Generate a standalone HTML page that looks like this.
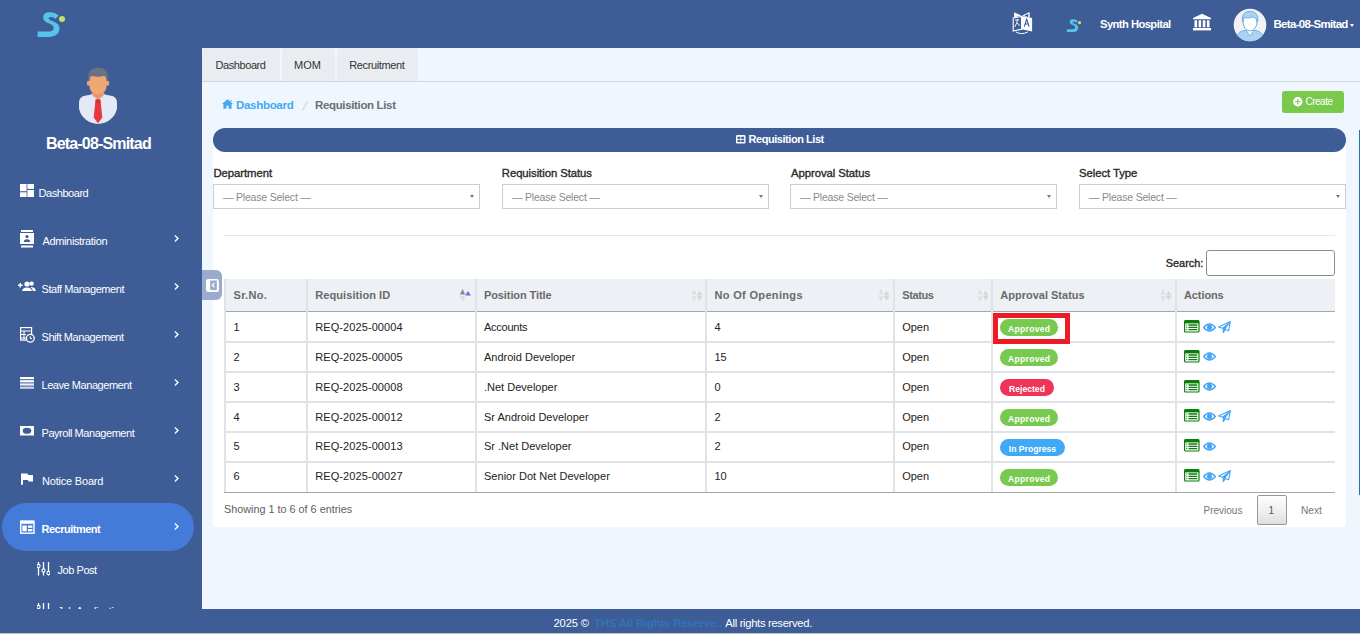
<!DOCTYPE html>
<html><head><meta charset="utf-8">
<style>
*{box-sizing:border-box;margin:0;padding:0}
html,body{width:1360px;height:634px;overflow:hidden}
body{position:relative;background:#eff6fe;font-family:"Liberation Sans",sans-serif;color:#222}
.a{position:absolute;white-space:nowrap}
.blue{background:#3e5d97}
.t{color:#fff;font-size:11px;letter-spacing:-0.45px;line-height:12px}
.chev{position:absolute;left:174px;width:5px;height:7px}
.tab{position:absolute;top:48px;height:33px;background:#e9edf1;border-radius:3px 3px 0 0;font-size:11px;color:#333;line-height:33px;text-align:center}
.lbl{font-size:11.3px;font-weight:normal;color:#2a2a2a;line-height:12px;-webkit-text-stroke:0.35px #2a2a2a}
.sel{position:absolute;top:184px;height:25px;width:267px;background:#fff;border:1px solid #c9ced6}
.sel span{position:absolute;left:9px;top:6px;font-size:10.5px;color:#8a8a8a;letter-spacing:-0.2px;line-height:12px}
.sel i{position:absolute;right:5.5px;top:10px;width:0;height:0;border-left:2.5px solid transparent;border-right:2.5px solid transparent;border-top:3px solid #777}
.th{position:absolute;font-size:11px;font-weight:bold;color:#6a6a6a;line-height:12px;top:289px}
.td{position:absolute;font-size:11px;color:#222;line-height:12px}
.badge{position:absolute;left:1000px;height:17px;border-radius:9px;color:#fff;font-size:8.6px;font-weight:bold;line-height:20px;text-align:center;overflow:hidden}
.vl{position:absolute;top:279px;width:2px;height:213px;background:#dfe3e8}
.hl{position:absolute;left:224px;width:1111px;height:2px;background:#dfe3e8}
.tt{font-size:11px;color:#333;line-height:12px;top:59px}
.sort{position:absolute;top:289px;width:11px;height:13px}
</style></head><body>

<!-- header -->
<div class="a blue" style="left:0;top:0;width:1360px;height:48px"></div>
<!-- sidebar -->
<div class="a blue side" style="left:0;top:48px;width:202px;height:586px"></div>

<!-- logo -->
<svg class="a" style="left:30px;top:5px" width="40" height="40" viewBox="30 5 40 40">
<path d="M58.6,15.6 C56,12.5 50.5,11.6 47,12.6 C43,13.8 42.3,17.8 44.2,20.4 C46.2,23.2 52.8,23.6 53.6,27 C54.1,29.5 52.3,31.6 48.5,31.6 L37.6,31.6 L37.6,36.9 L49,36.9 C56.5,36.9 60,32.6 59.4,27.6 C58.8,22.6 52.6,21.6 49.6,19.8 C48,18.8 48.3,17.4 50.2,17.1 C52.5,16.8 54.6,17.8 55.4,19 Z" fill="#56c3ec"/>
<circle cx="62" cy="19" r="3" fill="#c6e06a"/>
</svg>
<!-- avatar -->
<svg class="a" style="left:76px;top:64px" width="46" height="64" viewBox="76 64 46 64">
<path d="M79,103 Q79,96 86,95.5 L91.5,94.5 L104.5,94.5 L110,95.5 Q117,96 117,103 L117,108.5 A19.4,19.4 0 0,1 79,108.5 Z" fill="#e4e9f5"/>
<path d="M91,94.6 L98,101 L105,94.6 L103.5,93 L92.5,93 Z" fill="#d5dbe6"/>
<path d="M92.5,89 L103.5,89 L103.5,95.5 L98,99.5 L92.5,95.5 Z" fill="#e39a68"/>
<path d="M96,99.6 L100,99.6 L100.8,103 L102.3,117.5 L98,123.2 L93.7,117.5 L95.2,103 Z" fill="#e8383f"/>
<path d="M95.6,99.6 L100.4,99.6 L100.6,102.8 L95.4,102.8 Z" fill="#d42e36"/>
<ellipse cx="88.6" cy="83.2" rx="1.8" ry="2.6" fill="#eea46e"/>
<ellipse cx="107.4" cy="83.2" rx="1.8" ry="2.6" fill="#eea46e"/>
<path d="M89.3,78 Q89.3,70 98,70 Q106.7,70 106.7,78 L106.7,85 Q106.5,94 98,94.3 Q89.5,94 89.3,85 Z" fill="#f0a774"/>
<path d="M88.2,81 L88.2,76 Q88.2,68 98,67.8 Q107.8,68 107.8,76 L107.8,81 L106.4,81 Q106.4,76.5 104,76 Q98,77.5 92,76 Q89.6,76.5 89.6,81 Z" fill="#6b7283"/>
</svg>
<div class="a" style="left:46px;top:134.5px;font-size:16px;font-weight:bold;color:#fff;letter-spacing:-0.83px;line-height:18px">Beta-08-Smitad</div>

<!-- menu -->
<svg class="a" style="left:20px;top:184px" width="14" height="13"><rect x="0" y="0" width="6.6" height="7.2" fill="#fff"/><rect x="0" y="8.3" width="6.6" height="4.7" fill="#fff"/><rect x="7.4" y="0" width="6.6" height="4.9" fill="#fff"/><rect x="7.4" y="6" width="6.6" height="7" fill="#fff"/></svg>
<div class="a t" style="left:38.5px;top:187.2px">Dashboard</div>

<svg class="a" style="left:20px;top:230px" width="15" height="18"><rect x="1" y="0" width="12" height="2" fill="#fff"/><rect x="0" y="3" width="14" height="11" fill="#fff"/><rect x="1" y="15.5" width="12" height="2" fill="#fff"/><circle cx="7" cy="6.6" r="1.6" fill="#3e5d97"/><path d="M3.8,12 Q3.8,9.3 7,9.3 Q10.2,9.3 10.2,12 Z" fill="#3e5d97"/></svg>
<div class="a t" style="left:42.5px;top:235.2px;letter-spacing:-0.36px">Administration</div>
<svg class="chev" style="top:235.0px" viewBox="0 0 5 7"><path d="M0.8,0.6 L4,3.5 L0.8,6.4" fill="none" stroke="#fff" stroke-width="1.3"/></svg>

<svg class="a" style="left:18px;top:281px" width="18" height="11"><path d="M0,4.3 H4.6 M2.3,2 V6.6" stroke="#fff" stroke-width="1.4"/><circle cx="9" cy="3" r="2.6" fill="#fff"/><circle cx="13.6" cy="2.6" r="2.2" fill="#fff"/><path d="M4.2,10 Q4.2,6.5 9,6.5 Q13.8,6.5 13.8,10 Z" fill="#fff"/><path d="M12.4,6 Q17.6,6 17.6,9.5 V10 H14.8 Q14.8,7.5 12.4,6 Z" fill="#fff"/></svg>
<div class="a t" style="left:41.5px;top:282.8px">Staff Management</div>
<svg class="chev" style="top:282.5px" viewBox="0 0 5 7"><path d="M0.8,0.6 L4,3.5 L0.8,6.4" fill="none" stroke="#fff" stroke-width="1.3"/></svg>

<svg class="a" style="left:20px;top:327px" width="15" height="16"><rect x="0.6" y="0.6" width="11" height="12.5" fill="none" stroke="#fff" stroke-width="1.2"/><path d="M0.6,4 H11.6 M0.6,7.5 H6 M0.6,11 H6 M4,4 V13" stroke="#fff" stroke-width="1.1"/><circle cx="10.3" cy="11.3" r="3.9" fill="#3e5d97" stroke="#fff" stroke-width="1.3"/><path d="M10.3,9.3 V11.5 H12" stroke="#fff" stroke-width="1" fill="none"/></svg>
<div class="a t" style="left:41.5px;top:331.2px">Shift Management</div>
<svg class="chev" style="top:330.5px" viewBox="0 0 5 7"><path d="M0.8,0.6 L4,3.5 L0.8,6.4" fill="none" stroke="#fff" stroke-width="1.3"/></svg>

<svg class="a" style="left:20px;top:377px" width="14" height="12"><rect x="0" y="0" width="14" height="2.2" fill="#fff"/><rect x="0" y="3.2" width="14" height="2.2" fill="#fff"/><rect x="0" y="6.4" width="14" height="2.2" fill="#fff" opacity=".9"/><rect x="0" y="9.6" width="14" height="2.2" fill="#fff" opacity=".75"/></svg>
<div class="a t" style="left:41.5px;top:379.2px">Leave Management</div>
<svg class="chev" style="top:378.5px" viewBox="0 0 5 7"><path d="M0.8,0.6 L4,3.5 L0.8,6.4" fill="none" stroke="#fff" stroke-width="1.3"/></svg>

<svg class="a" style="left:20px;top:426px" width="14" height="10"><rect x="0" y="0" width="14" height="9.5" fill="#fff"/><ellipse cx="7" cy="4.75" rx="4.3" ry="3.1" fill="#3e5d97"/></svg>
<div class="a t" style="left:41.5px;top:427.2px">Payroll Management</div>
<svg class="chev" style="top:426.5px" viewBox="0 0 5 7"><path d="M0.8,0.6 L4,3.5 L0.8,6.4" fill="none" stroke="#fff" stroke-width="1.3"/></svg>

<svg class="a" style="left:21px;top:473px" width="13" height="12"><path d="M1,0.5 V11.8" stroke="#fff" stroke-width="2"/><path d="M1.5,0.5 H6.5 L7,2 H12 V8.5 H7.5 L7,7 H1.5 Z" fill="#fff"/></svg>
<div class="a t" style="left:42px;top:475.2px;letter-spacing:-0.2px">Notice Board</div>
<svg class="chev" style="top:474.5px" viewBox="0 0 5 7"><path d="M0.8,0.6 L4,3.5 L0.8,6.4" fill="none" stroke="#fff" stroke-width="1.3"/></svg>

<div class="a" style="left:2px;top:503px;width:192px;height:48px;border-radius:24px;background:#457bd8"></div>
<svg class="a" style="left:20px;top:519.5px" width="15" height="14"><rect x="0.7" y="1.2" width="13.3" height="12" fill="none" stroke="#fff" stroke-width="1.4"/><rect x="0.7" y="1.2" width="13.3" height="2.6" fill="#fff"/><path d="M2.5,0 V2 M5.5,0 V2 M9,0 V2 M12,0 V2" stroke="#fff" stroke-width="1"/><rect x="2.4" y="5.5" width="4.4" height="5.8" fill="#fff"/><rect x="8" y="5.5" width="4.4" height="2.3" fill="#fff"/><rect x="8" y="9" width="4.4" height="2.3" fill="#fff"/></svg>
<div class="a t" style="left:41.5px;top:523px;font-weight:bold;letter-spacing:-0.5px">Recruitment</div>
<svg class="chev" style="top:522.5px" viewBox="0 0 5 7"><path d="M0.8,0.6 L4,3.5 L0.8,6.4" fill="none" stroke="#fff" stroke-width="1.3"/></svg>

<svg class="a" style="left:37px;top:561.5px" width="13" height="14"><path d="M1.5,0 V13.5 M6.5,0 V13.5 M11.5,0 V13.5" stroke="#fff" stroke-width="1.3"/><circle cx="1.5" cy="4" r="1.6" fill="#3e5d97" stroke="#fff" stroke-width="1.1"/><circle cx="6.5" cy="8.5" r="1.6" fill="#3e5d97" stroke="#fff" stroke-width="1.1"/><circle cx="11.5" cy="11" r="1.6" fill="#3e5d97" stroke="#fff" stroke-width="1.1"/></svg>
<div class="a t" style="left:57.5px;top:564.3px">Job Post</div>

<div class="a" style="left:0;top:600px;width:202px;height:9px;overflow:hidden">
<svg class="a" style="left:37px;top:2.5px" width="13" height="14"><path d="M1.5,0 V13.5 M6.5,0 V13.5 M11.5,0 V13.5" stroke="#fff" stroke-width="1.3"/><circle cx="1.5" cy="4" r="1.6" fill="#3e5d97" stroke="#fff" stroke-width="1.1"/></svg>
<div class="a t" style="left:57.5px;top:5.3px">Job Application</div>
</div>


<!-- header right -->
<svg class="a" style="left:1011px;top:11px" width="23" height="25" viewBox="0 0 23 25">
<path d="M3.1,1.2 L10.6,4.8 L3.1,6.2 Z" fill="#fff"/>
<path d="M18.6,0.9 L11.1,4.6 L18.6,7 Z" fill="#fff"/>
<path d="M17.2,2.8 L13.5,4.6 L17.2,6.2 Z" fill="#2c4fa0"/>
<path d="M2.2,7 L10.6,5.4 L10.6,18.3 L2.2,20 Z" fill="none" stroke="#fff" stroke-width="1.1"/>
<path d="M10.6,5 L21.1,7 L21.1,20.5 L10.6,18.3 Z" fill="#fff"/>
<path d="M13.3,15.6 L15.7,8.2 L18.1,15.6 M14.2,13 H17.2" stroke="#3b4fb0" stroke-width="1.1" fill="none"/>
<path d="M4,9 H8 M6.6,8 Q6,13 3.6,16 M5.5,12 Q8,12.5 8.5,15" stroke="#fff" stroke-width="0.9" fill="none"/>
<path d="M5,21 Q10.6,24.2 16.7,21" stroke="#fff" stroke-width="1" fill="none"/>
</svg>
<svg class="a" style="left:1066px;top:18px" width="16" height="16" viewBox="36 10 30.8 30.8">
<path d="M58.6,15.6 C56,12.5 50.5,11.6 47,12.6 C43,13.8 42.3,17.8 44.2,20.4 C46.2,23.2 52.8,23.6 53.6,27 C54.1,29.5 52.3,31.6 48.5,31.6 L37.6,31.6 L37.6,36.9 L49,36.9 C56.5,36.9 60,32.6 59.4,27.6 C58.8,22.6 52.6,21.6 49.6,19.8 C48,18.8 48.3,17.4 50.2,17.1 C52.5,16.8 54.6,17.8 55.4,19 Z" fill="#56c3ec"/>
<circle cx="62" cy="19" r="3" fill="#c6e06a"/>
</svg>
<div class="a" style="left:1100px;top:17.5px;font-size:11.2px;font-weight:bold;color:#fff;letter-spacing:-0.55px;line-height:13px">Synth Hospital</div>
<svg class="a" style="left:1192px;top:13px" width="20" height="18" viewBox="0 0 20 18">
<path d="M10,0.8 L19,5 L19,6.3 L1,6.3 L1,5 Z" fill="#fff"/>
<rect x="2.5" y="7.3" width="2.6" height="7" fill="#fff"/><rect x="6.6" y="7.3" width="2.6" height="7" fill="#fff"/><rect x="10.8" y="7.3" width="2.6" height="7" fill="#fff"/><rect x="14.9" y="7.3" width="2.6" height="7" fill="#fff"/>
<rect x="1" y="15" width="18" height="2.4" fill="#fff"/>
</svg>
<svg class="a" style="left:1233px;top:8px" width="34" height="34" viewBox="0 0 34 34">
<defs><clipPath id="cc"><circle cx="17" cy="17" r="16.2"/></clipPath></defs>
<circle cx="17" cy="17" r="16.3" fill="#f2f2f2"/>
<g clip-path="url(#cc)">
<path d="M3,34 Q3,24 11,22.5 L23,22.5 Q31,24 31,34 Z" fill="#a9d2f5" stroke="#5ea6e6" stroke-width="0.8"/>
<path d="M13,22 L17,28 L21,22" fill="#fff" stroke="#5ea6e6" stroke-width="0.8"/>
<path d="M10,13 Q10,4 17,4 Q24,4 24,13 Q24,22 17,23 Q10,22 10,13 Z" fill="#fff" stroke="#5ea6e6" stroke-width="0.9"/>
<path d="M9.5,14 Q8,5 15,3.5 Q22,2.5 24.5,8 Q25.5,11 24.5,14 Q23,9 20,9 Q15,11 11,9.5 Z" fill="#a9d2f5" stroke="#5ea6e6" stroke-width="0.8"/>
</g>
</svg>
<div class="a" style="left:1273.5px;top:17.5px;font-size:11.5px;font-weight:bold;color:#fff;letter-spacing:-0.68px;line-height:13px">Beta-08-Smitad</div>
<div class="a" style="left:1350px;top:24px;width:0;height:0;border-left:2.5px solid transparent;border-right:2.5px solid transparent;border-top:3px solid #fff"></div>

<!-- tabs -->
<div class="a" style="left:202px;top:81px;width:1158px;height:1px;background:#d3d7dc"></div>
<div class="tab" style="left:202px;width:78px"></div><div class="a tt" style="left:215.5px;letter-spacing:-0.42px">Dashboard</div>
<div class="tab" style="left:282px;width:53px"></div><div class="a tt" style="left:294px;letter-spacing:0px">MOM</div>
<div class="tab" style="left:336.5px;width:81.5px"></div><div class="a tt" style="left:349.3px;letter-spacing:-0.37px">Recruitment</div>

<!-- breadcrumb -->
<svg class="a" style="left:222px;top:99px" width="11" height="10" viewBox="0 0 11 10"><path d="M5.5,0.3 L11,5 L9.6,5 L9.6,9.8 L6.6,9.8 L6.6,6.8 L4.4,6.8 L4.4,9.8 L1.4,9.8 L1.4,5 L0,5 Z M8.2,1 H9.4 V3 L8.2,2 Z" fill="#41aaf3"/></svg>
<div class="a" style="left:236px;top:98.5px;font-size:11.5px;font-weight:bold;color:#41aaf3;letter-spacing:-0.3px;line-height:13px">Dashboard</div>
<svg class="a" style="left:300px;top:99px" width="10" height="13"><path d="M2.3,11.5 L7.8,2" stroke="#d6d6d6" stroke-width="1.2"/></svg>
<div class="a" style="left:315px;top:98.5px;font-size:11.5px;font-weight:bold;color:#6e6e6e;letter-spacing:-0.35px;line-height:13px">Requisition List</div>

<!-- create -->
<div class="a" style="left:1282px;top:91px;width:62px;height:22px;background:#79c94b;border-radius:3px"></div>
<svg class="a" style="left:1292.7px;top:96.7px" width="10" height="10" viewBox="0 0 10 10"><circle cx="4.8" cy="4.8" r="4.7" fill="#fff"/><path d="M4.8,2.1 V7.5 M2.1,4.8 H7.5" stroke="#79c94b" stroke-width="1.1"/></svg>
<div class="a" style="left:1305.5px;top:96px;font-size:10px;color:#fff;letter-spacing:-0.5px;line-height:12px">Create</div>

<!-- panel -->
<div class="a" style="left:213px;top:140px;width:1133px;height:387px;background:#fff;border-radius:0 0 4px 4px"></div>
<div class="a" style="left:213px;top:128px;width:1133px;height:24px;background:#3e5d97;border-radius:12px"></div>
<svg class="a" style="left:735.5px;top:135px" width="10" height="9" viewBox="0 0 10 9"><rect x="0" y="0" width="9.5" height="8.6" rx="1.4" fill="#fff"/><rect x="1.5" y="1.7" width="2.9" height="2.2" fill="#3e5d97"/><rect x="5.2" y="1.7" width="2.9" height="2.2" fill="#3e5d97"/><rect x="1.5" y="4.8" width="2.9" height="2.2" fill="#3e5d97"/><rect x="5.2" y="4.8" width="2.9" height="2.2" fill="#3e5d97"/></svg>
<div class="a" style="left:748.5px;top:133px;font-size:11px;font-weight:bold;color:#fff;letter-spacing:-0.45px;line-height:13px">Requisition List</div>

<!-- filters -->
<div class="a lbl" style="left:213.5px;top:167px;letter-spacing:-0.05px">Department</div>
<div class="a lbl" style="left:501.8px;top:167px;letter-spacing:-0.05px">Requisition Status</div>
<div class="a lbl" style="left:791px;top:167px;letter-spacing:-0.05px">Approval Status</div>
<div class="a lbl" style="left:1079px;top:167px;letter-spacing:-0.05px">Select Type</div>
<div class="sel" style="left:213px"><span>— Please Select —</span><i></i></div>
<div class="sel" style="left:502px"><span>— Please Select —</span><i></i></div>
<div class="sel" style="left:790px"><span>— Please Select —</span><i></i></div>
<div class="sel" style="left:1079px"><span>— Please Select —</span><i></i></div>
<div class="a" style="left:224px;top:235px;width:1111px;height:1px;background:#e8e8e8"></div>

<!-- search -->
<div class="a" style="left:1165.8px;top:257px;font-size:10.9px;font-weight:normal;color:#2a2a2a;-webkit-text-stroke:0.35px #2a2a2a;line-height:12px">Search:</div>
<div class="a" style="left:1206px;top:250px;width:129px;height:26px;border:1px solid #8c8c8c;border-radius:3px;background:#fff"></div>

<!-- table -->
<div class="a" style="left:224px;top:279px;width:1111px;height:32px;background:#edf0f4"></div>
<div class="a" style="left:224px;top:311px;width:1111px;height:1.4px;background:#a3a7ac"></div>
<div class="hl" style="top:341px"></div>
<div class="hl" style="top:371px"></div>
<div class="hl" style="top:401px"></div>
<div class="hl" style="top:431px"></div>
<div class="hl" style="top:461px"></div>
<div class="a" style="left:224px;top:492px;width:1111px;height:1.4px;background:#a3a7ac"></div>
<div class="vl" style="left:224px"></div>
<div class="vl" style="left:306px"></div>
<div class="vl" style="left:475px"></div>
<div class="vl" style="left:705px"></div>
<div class="vl" style="left:893px"></div>
<div class="vl" style="left:991px"></div>
<div class="vl" style="left:1175px"></div>
<div class="th" style="left:233.5px;letter-spacing:0.3px">Sr.No.</div>
<div class="th" style="left:315.3px;letter-spacing:0.07px">Requisition ID</div>
<div class="th" style="left:484px;letter-spacing:-0.1px">Position Title</div>
<div class="th" style="left:714.5px;letter-spacing:0.33px">No Of Openings</div>
<div class="th" style="left:902.2px;letter-spacing:-0.38px">Status</div>
<div class="th" style="left:1000.3px;letter-spacing:0.0px">Approval Status</div>
<div class="th" style="left:1184px;letter-spacing:-0.1px">Actions</div>
<svg class="a" style="left:459px;top:288px" width="13" height="15" viewBox="0 0 13 15"><path d="M3.6,1 L0.9,6.6 L6.2,6.6 Z" fill="#8a8a8a"/><path d="M9,3 L6.2,7.6 L11.8,7.6 Z" fill="#6b70e0"/><path d="M0.9,8.2 L6.2,8.2 L3.6,13.7 Z" fill="#d9dce0"/></svg>
<svg class="a" style="left:689.8px;top:288px" width="13" height="15" viewBox="0 0 13 15"><path d="M4,1 L1.2,6.6 L6.7,6.6 Z" fill="#dde0e4"/><path d="M1.2,8.2 L6.7,8.2 L4,13.7 Z" fill="#dde0e4"/><path d="M9.5,2.8 L6.9,7.5 L12.3,7.5 Z" fill="#d6d6d6"/><path d="M6.9,8 L12.3,8 L9.5,12.7 Z" fill="#d6d6d6"/></svg>
<svg class="a" style="left:877.2px;top:288px" width="13" height="15" viewBox="0 0 13 15"><path d="M4,1 L1.2,6.6 L6.7,6.6 Z" fill="#dde0e4"/><path d="M1.2,8.2 L6.7,8.2 L4,13.7 Z" fill="#dde0e4"/><path d="M9.5,2.8 L6.9,7.5 L12.3,7.5 Z" fill="#d6d6d6"/><path d="M6.9,8 L12.3,8 L9.5,12.7 Z" fill="#d6d6d6"/></svg>
<svg class="a" style="left:975.9px;top:288px" width="13" height="15" viewBox="0 0 13 15"><path d="M4,1 L1.2,6.6 L6.7,6.6 Z" fill="#dde0e4"/><path d="M1.2,8.2 L6.7,8.2 L4,13.7 Z" fill="#dde0e4"/><path d="M9.5,2.8 L6.9,7.5 L12.3,7.5 Z" fill="#d6d6d6"/><path d="M6.9,8 L12.3,8 L9.5,12.7 Z" fill="#d6d6d6"/></svg>
<svg class="a" style="left:1159px;top:288px" width="13" height="15" viewBox="0 0 13 15"><path d="M4,1 L1.2,6.6 L6.7,6.6 Z" fill="#dde0e4"/><path d="M1.2,8.2 L6.7,8.2 L4,13.7 Z" fill="#dde0e4"/><path d="M9.5,2.8 L6.9,7.5 L12.3,7.5 Z" fill="#d6d6d6"/><path d="M6.9,8 L12.3,8 L9.5,12.7 Z" fill="#d6d6d6"/></svg>
<div class="td" style="left:233.5px;top:321.0px">1</div>
<div class="td" style="left:315.3px;top:321.0px;letter-spacing:0.08px">REQ-2025-00004</div>
<div class="td" style="left:484px;top:321.0px;letter-spacing:-0.26px">Accounts</div>
<div class="td" style="left:714.5px;top:321.0px">4</div>
<div class="td" style="left:902.2px;top:321.0px">Open</div>
<div class="badge" style="top:319.0px;width:58px;background:#77c94f;letter-spacing:0.3px;text-indent:0.3px">Approved</div>
<svg class="a" style="left:1183.5px;top:320.0px" width="16" height="13" viewBox="0 0 16 13"><rect x="0.6" y="0.6" width="14.4" height="11.4" rx="1" fill="#fff" stroke="#0a7d0a" stroke-width="1.2"/><rect x="0.6" y="0.6" width="14.4" height="2.8" fill="#0a7d0a"/><path d="M4.5,5 H13.3 M4.5,7.3 H13.3 M4.5,9.6 H13.3" stroke="#0a7d0a" stroke-width="1.3"/><path d="M2.3,5 H3.2 M2.3,7.3 H3.2 M2.3,9.6 H3.2" stroke="#333" stroke-width="1"/></svg>
<svg class="a" style="left:1202.5px;top:322.5px" width="13" height="9" viewBox="0 0 13 9"><path d="M0.7,4.5 Q6.5,-2.5 12.3,4.5 Q6.5,11.5 0.7,4.5 Z" fill="none" stroke="#42a5f5" stroke-width="1.3"/><circle cx="6.5" cy="4.3" r="2.6" fill="#42a5f5"/></svg>
<svg class="a" style="left:1217.5px;top:321.0px" width="13" height="12" viewBox="0 0 13 12"><path d="M12.4,0.5 L0.6,6 L4.6,7.3 L11.2,2.3 L5.4,8 L5.2,11.6 L7.3,8.6 L10.6,9.8 Z" fill="none" stroke="#42a5f5" stroke-width="1.1" stroke-linejoin="round"/><path d="M11.2,2.3 L5.4,8 L5.2,11.6 L7.3,8.6 Z" fill="#42a5f5"/></svg>
<div class="td" style="left:233.5px;top:350.7px">2</div>
<div class="td" style="left:315.3px;top:350.7px;letter-spacing:0.08px">REQ-2025-00005</div>
<div class="td" style="left:484px;top:350.7px;letter-spacing:0px">Android Developer</div>
<div class="td" style="left:714.5px;top:350.7px">15</div>
<div class="td" style="left:902.2px;top:350.7px">Open</div>
<div class="badge" style="top:348.9px;width:58px;background:#77c94f;letter-spacing:0.3px;text-indent:0.3px">Approved</div>
<svg class="a" style="left:1183.5px;top:349.8px" width="16" height="13" viewBox="0 0 16 13"><rect x="0.6" y="0.6" width="14.4" height="11.4" rx="1" fill="#fff" stroke="#0a7d0a" stroke-width="1.2"/><rect x="0.6" y="0.6" width="14.4" height="2.8" fill="#0a7d0a"/><path d="M4.5,5 H13.3 M4.5,7.3 H13.3 M4.5,9.6 H13.3" stroke="#0a7d0a" stroke-width="1.3"/><path d="M2.3,5 H3.2 M2.3,7.3 H3.2 M2.3,9.6 H3.2" stroke="#333" stroke-width="1"/></svg>
<svg class="a" style="left:1202.5px;top:352.3px" width="13" height="9" viewBox="0 0 13 9"><path d="M0.7,4.5 Q6.5,-2.5 12.3,4.5 Q6.5,11.5 0.7,4.5 Z" fill="none" stroke="#42a5f5" stroke-width="1.3"/><circle cx="6.5" cy="4.3" r="2.6" fill="#42a5f5"/></svg>
<div class="td" style="left:233.5px;top:381.1px">3</div>
<div class="td" style="left:315.3px;top:381.1px;letter-spacing:0.08px">REQ-2025-00008</div>
<div class="td" style="left:484px;top:381.1px;letter-spacing:0px">.Net Developer</div>
<div class="td" style="left:714.5px;top:381.1px">0</div>
<div class="td" style="left:902.2px;top:381.1px">Open</div>
<div class="badge" style="top:378.8px;width:54px;background:#ee3457">Rejected</div>
<svg class="a" style="left:1183.5px;top:379.6px" width="16" height="13" viewBox="0 0 16 13"><rect x="0.6" y="0.6" width="14.4" height="11.4" rx="1" fill="#fff" stroke="#0a7d0a" stroke-width="1.2"/><rect x="0.6" y="0.6" width="14.4" height="2.8" fill="#0a7d0a"/><path d="M4.5,5 H13.3 M4.5,7.3 H13.3 M4.5,9.6 H13.3" stroke="#0a7d0a" stroke-width="1.3"/><path d="M2.3,5 H3.2 M2.3,7.3 H3.2 M2.3,9.6 H3.2" stroke="#333" stroke-width="1"/></svg>
<svg class="a" style="left:1202.5px;top:382.1px" width="13" height="9" viewBox="0 0 13 9"><path d="M0.7,4.5 Q6.5,-2.5 12.3,4.5 Q6.5,11.5 0.7,4.5 Z" fill="none" stroke="#42a5f5" stroke-width="1.3"/><circle cx="6.5" cy="4.3" r="2.6" fill="#42a5f5"/></svg>
<div class="td" style="left:233.5px;top:410.8px">4</div>
<div class="td" style="left:315.3px;top:410.8px;letter-spacing:0.08px">REQ-2025-00012</div>
<div class="td" style="left:484px;top:410.8px;letter-spacing:0px">Sr Android Developer</div>
<div class="td" style="left:714.5px;top:410.8px">2</div>
<div class="td" style="left:902.2px;top:410.8px">Open</div>
<div class="badge" style="top:408.7px;width:58px;background:#77c94f;letter-spacing:0.3px;text-indent:0.3px">Approved</div>
<svg class="a" style="left:1183.5px;top:409.4px" width="16" height="13" viewBox="0 0 16 13"><rect x="0.6" y="0.6" width="14.4" height="11.4" rx="1" fill="#fff" stroke="#0a7d0a" stroke-width="1.2"/><rect x="0.6" y="0.6" width="14.4" height="2.8" fill="#0a7d0a"/><path d="M4.5,5 H13.3 M4.5,7.3 H13.3 M4.5,9.6 H13.3" stroke="#0a7d0a" stroke-width="1.3"/><path d="M2.3,5 H3.2 M2.3,7.3 H3.2 M2.3,9.6 H3.2" stroke="#333" stroke-width="1"/></svg>
<svg class="a" style="left:1202.5px;top:411.9px" width="13" height="9" viewBox="0 0 13 9"><path d="M0.7,4.5 Q6.5,-2.5 12.3,4.5 Q6.5,11.5 0.7,4.5 Z" fill="none" stroke="#42a5f5" stroke-width="1.3"/><circle cx="6.5" cy="4.3" r="2.6" fill="#42a5f5"/></svg>
<svg class="a" style="left:1217.5px;top:410.4px" width="13" height="12" viewBox="0 0 13 12"><path d="M12.4,0.5 L0.6,6 L4.6,7.3 L11.2,2.3 L5.4,8 L5.2,11.6 L7.3,8.6 L10.6,9.8 Z" fill="none" stroke="#42a5f5" stroke-width="1.1" stroke-linejoin="round"/><path d="M11.2,2.3 L5.4,8 L5.2,11.6 L7.3,8.6 Z" fill="#42a5f5"/></svg>
<div class="td" style="left:233.5px;top:439.8px">5</div>
<div class="td" style="left:315.3px;top:439.8px;letter-spacing:0.08px">REQ-2025-00013</div>
<div class="td" style="left:484px;top:439.8px;letter-spacing:0px">Sr .Net Developer</div>
<div class="td" style="left:714.5px;top:439.8px">2</div>
<div class="td" style="left:902.2px;top:439.8px">Open</div>
<div class="badge" style="top:438.6px;width:65px;background:#3fa9f5">In Progress</div>
<svg class="a" style="left:1183.5px;top:439.2px" width="16" height="13" viewBox="0 0 16 13"><rect x="0.6" y="0.6" width="14.4" height="11.4" rx="1" fill="#fff" stroke="#0a7d0a" stroke-width="1.2"/><rect x="0.6" y="0.6" width="14.4" height="2.8" fill="#0a7d0a"/><path d="M4.5,5 H13.3 M4.5,7.3 H13.3 M4.5,9.6 H13.3" stroke="#0a7d0a" stroke-width="1.3"/><path d="M2.3,5 H3.2 M2.3,7.3 H3.2 M2.3,9.6 H3.2" stroke="#333" stroke-width="1"/></svg>
<svg class="a" style="left:1202.5px;top:441.7px" width="13" height="9" viewBox="0 0 13 9"><path d="M0.7,4.5 Q6.5,-2.5 12.3,4.5 Q6.5,11.5 0.7,4.5 Z" fill="none" stroke="#42a5f5" stroke-width="1.3"/><circle cx="6.5" cy="4.3" r="2.6" fill="#42a5f5"/></svg>
<div class="td" style="left:233.5px;top:469.5px">6</div>
<div class="td" style="left:315.3px;top:469.5px;letter-spacing:0.08px">REQ-2025-00027</div>
<div class="td" style="left:484px;top:469.5px;letter-spacing:0.02px">Senior Dot Net Developer</div>
<div class="td" style="left:714.5px;top:469.5px">10</div>
<div class="td" style="left:902.2px;top:469.5px">Open</div>
<div class="badge" style="top:468.5px;width:58px;background:#77c94f;letter-spacing:0.3px;text-indent:0.3px">Approved</div>
<svg class="a" style="left:1183.5px;top:469.0px" width="16" height="13" viewBox="0 0 16 13"><rect x="0.6" y="0.6" width="14.4" height="11.4" rx="1" fill="#fff" stroke="#0a7d0a" stroke-width="1.2"/><rect x="0.6" y="0.6" width="14.4" height="2.8" fill="#0a7d0a"/><path d="M4.5,5 H13.3 M4.5,7.3 H13.3 M4.5,9.6 H13.3" stroke="#0a7d0a" stroke-width="1.3"/><path d="M2.3,5 H3.2 M2.3,7.3 H3.2 M2.3,9.6 H3.2" stroke="#333" stroke-width="1"/></svg>
<svg class="a" style="left:1202.5px;top:471.5px" width="13" height="9" viewBox="0 0 13 9"><path d="M0.7,4.5 Q6.5,-2.5 12.3,4.5 Q6.5,11.5 0.7,4.5 Z" fill="none" stroke="#42a5f5" stroke-width="1.3"/><circle cx="6.5" cy="4.3" r="2.6" fill="#42a5f5"/></svg>
<svg class="a" style="left:1217.5px;top:470.0px" width="13" height="12" viewBox="0 0 13 12"><path d="M12.4,0.5 L0.6,6 L4.6,7.3 L11.2,2.3 L5.4,8 L5.2,11.6 L7.3,8.6 L10.6,9.8 Z" fill="none" stroke="#42a5f5" stroke-width="1.1" stroke-linejoin="round"/><path d="M11.2,2.3 L5.4,8 L5.2,11.6 L7.3,8.6 Z" fill="#42a5f5"/></svg>
<div class="a" style="left:993px;top:313px;width:77px;height:31px;border:5px solid #ed1c24"></div>
<div class="a" style="left:224px;top:502.5px;font-size:10.8px;color:#606060;letter-spacing:0.01px;line-height:12px">Showing 1 to 6 of 6 entries</div>
<div class="a" style="left:1203.5px;top:504.5px;font-size:10px;color:#777;letter-spacing:0px;line-height:12px">Previous</div>
<div class="a" style="left:1257px;top:495px;width:30px;height:30px;border:1px solid #979797;border-radius:2px;background:linear-gradient(#fff,#e0e0e0)"></div>
<div class="a" style="left:1268.5px;top:504.5px;font-size:10px;color:#555;line-height:12px">1</div>
<div class="a" style="left:1301px;top:504.5px;font-size:10.2px;color:#777;line-height:12px">Next</div>

<!-- collapse tab -->
<div class="a" style="left:202px;top:270px;width:20px;height:30px;background:#9aacce;border-radius:0 6px 6px 0"></div>
<svg class="a" style="left:206px;top:279px" width="13" height="13" viewBox="0 0 13 13"><rect x="0" y="0" width="12.9" height="12.9" rx="2.2" fill="#fff"/><rect x="4.2" y="1.5" width="6.6" height="9.6" fill="#9aacce"/><path d="M8.4,4.2 L6.4,6.3 L8.4,8.4" fill="none" stroke="#fff" stroke-width="1.3"/></svg>

<!-- right edge line -->
<div class="a" style="left:1359px;top:130px;width:1px;height:365px;background:#2870b8"></div>

<!-- footer -->
<div class="a blue" style="left:0;top:609px;width:1360px;height:24px"></div>
<div class="a" style="left:0;top:633px;width:1360px;height:1px;background:#b3c9c1"></div>

<div class="a" style="left:553.5px;top:616.5px;font-size:11.2px;color:#fff;letter-spacing:-0.135px;line-height:12px">2025 ©</div>
<div class="a" style="left:594.3px;top:616.5px;font-size:11.2px;font-weight:bold;color:#2f74b9;letter-spacing:-0.1px;line-height:12px">THS All Rights Reserve .</div>
<div class="a" style="left:725.3px;top:616.5px;font-size:11.2px;color:#fff;letter-spacing:-0.3px;line-height:12px">All rights reserved.</div>
</body></html>
